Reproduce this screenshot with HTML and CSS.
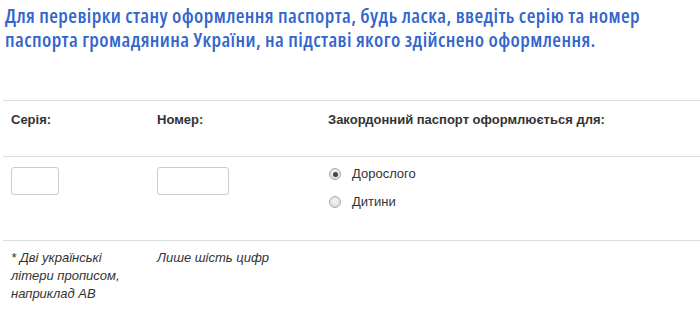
FILE: index.html
```html
<!DOCTYPE html>
<html>
<head>
<meta charset="utf-8">
<link rel="stylesheet" href="styles.css">
</head>
<body>
<div class="page">
  <h2 class="intro">Для перевірки стану оформлення паспорта, будь ласка, введіть серію та номер паспорта громадянина України, на підставі якого здійснено оформлення.</h2>
  <div class="table">
    <div class="row head">
      <div class="cell c1">Серія:</div>
      <div class="cell c2">Номер:</div>
      <div class="cell c3">Закордонний паспорт оформлюється для:</div>
    </div>
    <div class="row body">
      <div class="cell c1"><input class="field f-series" type="text"></div>
      <div class="cell c2"><input class="field f-number" type="text"></div>
      <div class="cell c3 radios">
        <label class="radio"><span class="dot checked"></span>Дорослого</label>
        <label class="radio"><span class="dot"></span>Дитини</label>
      </div>
    </div>
    <div class="row notes">
      <div class="cell c1">* Дві українські літери прописом, наприклад АВ</div>
      <div class="cell c2">Лише шість цифр</div>
      <div class="cell c3"></div>
    </div>
  </div>
</div>
</body>
</html>
```
FILE: styles.css
```css
html, body {
  margin: 0;
  padding: 0;
  background: #fff;
  overflow: hidden;
}
.page {
  padding: 0 0 0 3px;
}
.intro {
  margin: 0;
  padding: 4px 0 0 2px;
  width: 670px;
  font-family: "Open Sans", sans-serif;
  font-stretch: 75%;
  font-weight: 600;
  font-size: 20px;
  letter-spacing: 0.4px;
  line-height: 24px;
  color: #3366cc;
  height: 100px;
  box-sizing: border-box;
}
.table {
  font-family: "Liberation Sans", Arial, sans-serif;
  font-size: 13px;
  color: #333;
}
.row {
  display: grid;
  grid-template-columns: 146px 171px 1fr;
  border-top: 1px solid #ddd;
}
.cell {
  padding: 0 8px;
}
.head {
  height: 55px;
  font-weight: bold;
}
.head .cell {
  padding-top: 11px;
  line-height: 16px;
}
.body {
  height: 83px;
}
.body .cell {
  padding-top: 10px;
}
.body .radios {
  padding-top: 8px;
}
.field {
  display: block;
  margin: 0;
  box-sizing: border-box;
  height: 28px;
  border: 1px solid #ccc;
  border-radius: 3px;
  background: #fff;
  padding: 0 6px;
}
.f-series { width: 48px; }
.f-number { width: 72px; }
.radio {
  display: flex;
  align-items: center;
  height: 18px;
  margin-bottom: 10px;
  line-height: 18px;
  color: #333;
}
.dot {
  width: 12px;
  height: 12px;
  box-sizing: border-box;
  border-radius: 50%;
  border: 1px solid #a8a8a8;
  background: radial-gradient(circle at 50% 40%, #f4f4f4 0%, #e2e2e2 60%, #d4d4d4 100%);
  margin: 0 11px 0 1px;
  position: relative;
}
.dot.checked::after {
  content: "";
  position: absolute;
  left: 2.5px;
  top: 2.5px;
  width: 5px;
  height: 5px;
  border-radius: 50%;
  background: #444;
}
.notes .cell {
  padding-top: 8px;
  font-style: italic;
  line-height: 18px;
}
```
